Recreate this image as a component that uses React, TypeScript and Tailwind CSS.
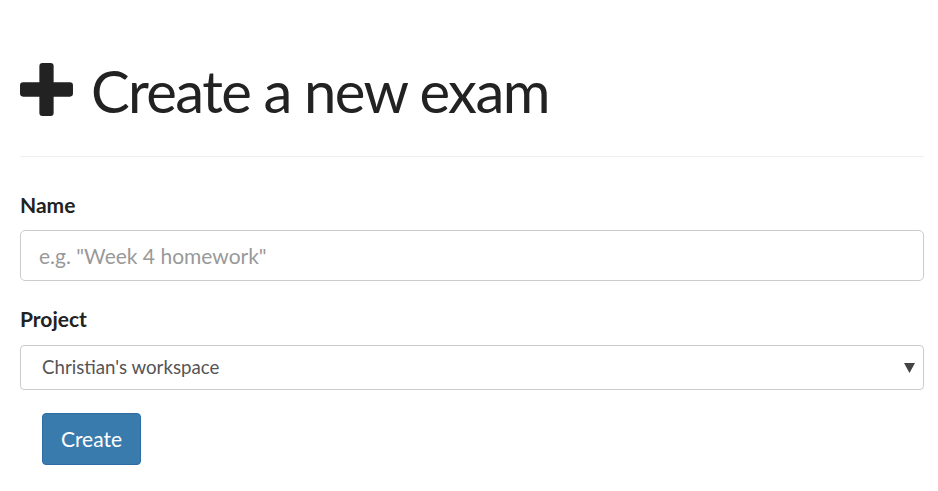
export default function App() {
  return (
    <div className="min-h-[491px] bg-white pl-5 pr-[14px] pt-[56px] font-['Lato','Liberation_Sans',sans-serif] text-[#222]">
      <h1 className="flex items-center gap-[17px] pb-[30px] border-b border-[#eee]">
        <svg width="55" height="55" viewBox="0 0 54 54" className="shrink-0 -ml-px -mt-[3px]">
          <path
            d="M20 4a3 3 0 0 1 3-3h8a3 3 0 0 1 3 3v16h16a3 3 0 0 1 3 3v8a3 3 0 0 1-3 3H34v16a3 3 0 0 1-3 3h-8a3 3 0 0 1-3-3V34H4a3 3 0 0 1-3-3v-8a3 3 0 0 1 3-3h16z"
            fill="#222"
          />
        </svg>
        <span className="text-[58px] leading-[70px] font-normal tracking-[-1.6px]">Create a new exam</span>
      </h1>

      <form className="pt-[34px]">
        <label className="block text-[21px] leading-[28px] font-bold text-[#222]">Name</label>
        <input
          type="text"
          placeholder='e.g. "Week 4 homework"'
          className="mt-[11px] block w-full h-[51px] px-[18px] rounded-[5px] border border-[#ccc] text-[21px] text-[#555] placeholder:text-[#999] outline-none"
        />

        <label className="mt-[24px] block text-[21px] leading-[28px] font-bold text-[#222]">Project</label>
        <div className="relative mt-[12px]">
          <select className="block w-full h-[45px] appearance-none pl-[21px] pr-8 rounded-[4px] border border-[#ccc] bg-white text-[18.7px] text-[#555] outline-none">
            <option>Christian's workspace</option>
          </select>
          <svg
            width="11"
            height="10"
            viewBox="0 0 11 10"
            className="pointer-events-none absolute right-[9px] top-1/2 -translate-y-1/2"
          >
            <path d="M0 0h11L5.5 10z" fill="#444" />
          </svg>
        </div>

        <button
          type="button"
          className="mt-[23px] ml-[22px] h-[52px] w-[99px] rounded-[4px] border border-[#2e6da4] bg-[#3a7bae] text-[21px] text-white"
        >
          Create
        </button>
      </form>
    </div>
  );
}
